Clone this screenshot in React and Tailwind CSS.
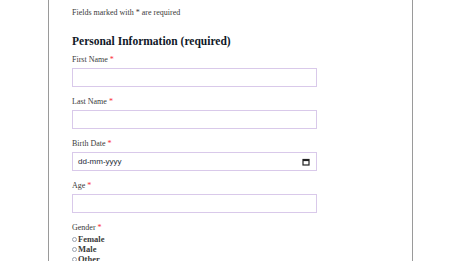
import React from 'react';

const serif = { fontFamily: '"Liberation Serif", "DejaVu Serif", serif' };

const Label = ({ children }) => (
  <label className="block text-[8px] leading-[10px] text-[#3a3a3a]">
    {children} <span className="text-red-500">*</span>
  </label>
);

const Field = ({ label, type = 'text', placeholder }) => (
  <div className="mb-[10px]">
    <Label>{label}</Label>
    <div className="mt-[3px] w-[245px] h-[19px] border border-[#d9c9ea] bg-white flex items-center justify-between px-[5px]">
      {placeholder && (
        <span className="text-[8px] text-gray-800" style={{ fontFamily: '"Liberation Sans", Arial, sans-serif' }}>
          {placeholder}
        </span>
      )}
      {type === 'date' && (
        <svg width="8" height="8" viewBox="0 0 8 8" className="mr-[1px]">
          <rect x="1" y="1.5" width="6" height="5.5" fill="none" stroke="#222" strokeWidth="1.2" />
          <rect x="1" y="1.5" width="6" height="1.6" fill="#222" />
        </svg>
      )}
    </div>
  </div>
);

const Radio = ({ label }) => (
  <div className="flex items-center h-[10px] text-[8.5px] font-semibold text-[#3a3a3a]">
    <span className="inline-block w-[5px] h-[5px] rounded-full border border-gray-400 mr-[1px]" />
    {label}
  </div>
);

export default function App() {
  return (
    <div className="w-[474px] h-[261px] overflow-hidden bg-white" style={serif}>
      <div className="ml-[48px] w-[365px] h-full border-x-[1.5px] border-[#9a9a9a] pl-[23px] pt-[8px]">
        <p className="text-[8px] leading-[9px] text-[#3a3a3a]">Fields marked with * are required</p>
        <h2 className="mt-[16px] text-[11.5px] leading-[16px] font-bold text-gray-900">Personal Information (required)</h2>
        <div className="mt-[6px]">
          <Field label="First Name" />
          <Field label="Last Name" />
          <Field label="Birth Date" type="date" placeholder="dd-mm-yyyy" />
          <Field label="Age" />
          <div>
            <Label>Gender</Label>
            <div className="mt-[1px]">
              <Radio label="Female" />
              <Radio label="Male" />
              <Radio label="Other" />
            </div>
          </div>
        </div>
      </div>
    </div>
  );
}
